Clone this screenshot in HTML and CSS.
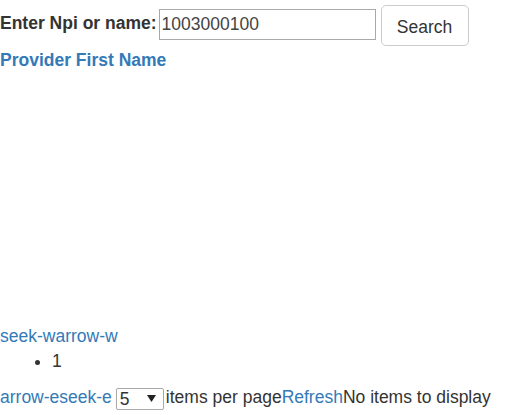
FILE: index.html
```html
<!DOCTYPE html>
<html lang="en">
<head>
<meta charset="utf-8">
<title>Provider search</title>
<link rel="stylesheet" href="styles.css">
</head>
<body>
<form class="search-bar">
  <label class="search-label" for="npi">Enter Npi or name:</label>
  <input class="search-input" id="npi" type="text" value="1003000100">
  <button class="btn" type="button">Search</button>
</form>
<div class="grid">
  <div class="grid-header"><a class="header-link" href="#">Provider First Name</a></div>
  <div class="grid-content"></div>
  <div class="pager">
    <div class="pager-line"><a class="pager-link" href="#">seek-w</a><a class="pager-link" href="#">arrow-w</a></div>
    <ul class="pager-numbers"><li>1</li></ul>
    <div class="pager-bottom">
      <a class="pager-link" href="#">arrow-e</a><a class="pager-link" href="#">seek-e</a>
      <span class="select-wrap">
        <select class="page-size"><option>5</option><option>10</option><option>20</option></select>
        <svg class="select-arrow" width="9" height="7" viewBox="0 0 9 7"><path d="M0 0h9L4.5 7z" fill="#222"/></svg>
      </span>
      <span class="pager-text">items per page</span><a class="pager-link" href="#">Refresh</a><span class="pager-text">No items to display</span>
    </div>
  </div>
</div>
</body>
</html>
```
FILE: styles.css
```css
html, body {
  margin: 0;
  padding: 0;
  background: #fff;
}
body {
  font-family: "Liberation Sans", Arial, sans-serif;
  font-size: 17.5px;
  line-height: 25px;
  color: #333;
}
.search-bar {
  display: flex;
  align-items: flex-start;
  margin: 0;
}
.search-label {
  font-weight: bold;
  margin-top: 11px;
}
.search-input {
  box-sizing: border-box;
  margin: 9px 0 0 2px;
  width: 217px;
  height: 31px;
  border: 1px solid #a9a9a9;
  padding: 0 2px;
  font-family: "Liberation Sans", Arial, sans-serif;
  font-size: 17.5px;
  color: #444;
  outline: none;
}
.btn {
  box-sizing: border-box;
  margin: 5px 0 0 5px;
  width: 88px;
  height: 41px;
  padding: 3px 0 0;
  background: #fff;
  border: 1px solid #ccc;
  border-radius: 5px;
  font-family: "Liberation Sans", Arial, sans-serif;
  font-size: 17.5px;
  color: #333;
}
.grid-header {
  padding-top: 2px;
}
.header-link {
  font-weight: bold;
  color: #337ab7;
  text-decoration: none;
}
.grid-content {
  height: 251px;
}
.pager-link {
  color: #337ab7;
  text-decoration: none;
}
.pager-numbers {
  margin: 0 0 11px;
  padding-left: 52px;
}
.pager-bottom {
  display: flex;
  align-items: center;
  height: 25px;
  white-space: nowrap;
}
.select-wrap {
  position: relative;
  display: inline-block;
  margin: 0 2px 0 4px;
  height: 22px;
}
.page-size {
  box-sizing: border-box;
  appearance: none;
  -webkit-appearance: none;
  width: 48px;
  height: 22px;
  border: 1px solid #a9a9a9;
  border-radius: 2px;
  background: #fff;
  padding: 0 0 0 3px;
  font-family: "Liberation Sans", Arial, sans-serif;
  font-size: 17.5px;
  line-height: 20px;
  color: #333;
}
.select-arrow {
  position: absolute;
  right: 8px;
  top: 8px;
}
```
